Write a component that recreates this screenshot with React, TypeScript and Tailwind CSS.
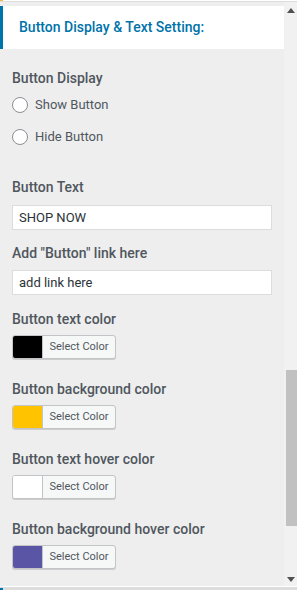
import React from "react";

const font = { fontFamily: "Roboto, 'Liberation Sans', sans-serif" };

function Label({ children, className = "" }: { children: React.ReactNode; className?: string }) {
  return <div className={`text-[14px] font-medium text-[#50575e] leading-[18px] ${className}`}>{children}</div>;
}

function Radio({ label }: { label: string }) {
  return (
    <div className="flex items-center gap-[7px] h-[18px]">
      <span className="w-[16px] h-[16px] rounded-full border border-[#8c8f94] bg-white" />
      <span className="text-[13px] text-[#50575e]">{label}</span>
    </div>
  );
}

function ColorBtn({ color }: { color: string }) {
  return (
    <div className="flex w-[104px] h-[24px] rounded-[3px] border border-[#c3c4c7] bg-[#f6f7f7] overflow-hidden shadow-[0_1px_0_#ccc]">
      <span className="w-[30px] h-full border-r border-[#c3c4c7]" style={{ background: color }} />
      <span className="flex-1 flex items-center justify-center text-[11px] text-[#50575e]">Select Color</span>
    </div>
  );
}

function Input({ value }: { value: string }) {
  return (
    <div className="w-[260px] h-[25px] bg-white border border-[#dcdcde] flex items-center px-[6px] text-[13px] text-[#2c3338]">
      {value}
    </div>
  );
}

export default function App() {
  return (
    <div className="w-[297px] h-[590px] bg-[#eeeeee] overflow-hidden flex flex-col" style={font}>
      <div className="h-[2px] border-b border-[#dddddd] relative bg-white">
        <span className="absolute left-0 top-0 w-[3px] h-[1px] bg-[#f0b849]" />
      </div>
      <div className="flex flex-1 min-h-0">
        <div className="w-[284px] flex flex-col">
          <div className="mt-[4px] h-[43px] bg-white border-l-[3px] border-[#0073aa] flex items-center pl-[16px]">
            <span className="text-[14px] font-medium text-[#0073aa]">Button Display &amp; Text Setting:</span>
          </div>
          <div className="px-[12px] pt-[20px] flex flex-col">
            <Label>Button Display</Label>
            <div className="mt-[9px] flex flex-col gap-[14px]">
              <Radio label="Show Button" />
              <Radio label="Hide Button" />
            </div>
            <Label className="mt-[32px]">Button Text</Label>
            <div className="mt-[9px]"><Input value="SHOP NOW" /></div>
            <Label className="mt-[14px]">Add "Button" link here</Label>
            <div className="mt-[8px]"><Input value="add link here" /></div>
            <Label className="mt-[15px]">Button text color</Label>
            <div className="mt-[7px]"><ColorBtn color="#000000" /></div>
            <Label className="mt-[21px]">Button background color</Label>
            <div className="mt-[7px]"><ColorBtn color="#ffc300" /></div>
            <Label className="mt-[21px]">Button text hover color</Label>
            <div className="mt-[7px]"><ColorBtn color="#ffffff" /></div>
            <Label className="mt-[21px]">Button background hover color</Label>
            <div className="mt-[7px]"><ColorBtn color="#5b55a5" /></div>
          </div>
        </div>
        <div className="w-[13px] bg-[#f1f1f1] flex flex-col items-center">
          <svg width="8" height="5" viewBox="0 0 8 5" className="mt-[6px]"><path d="M0 5 L4 0 L8 5 Z" fill="#505050" /></svg>
          <div className="mt-[357px] ml-[2px] w-[11px] h-[156px] bg-[#c1c1c1]" />
          <div className="flex-1" />
          <svg width="8" height="5" viewBox="0 0 8 5" className="mb-[4px]"><path d="M0 0 L8 0 L4 5 Z" fill="#505050" /></svg>
        </div>
      </div>
      <div className="h-[4px] bg-[#dddddd] border-t border-white relative">
        <span className="absolute left-0 top-[1px] w-[3px] h-[2px] bg-[#0073aa]" />
      </div>
    </div>
  );
}
